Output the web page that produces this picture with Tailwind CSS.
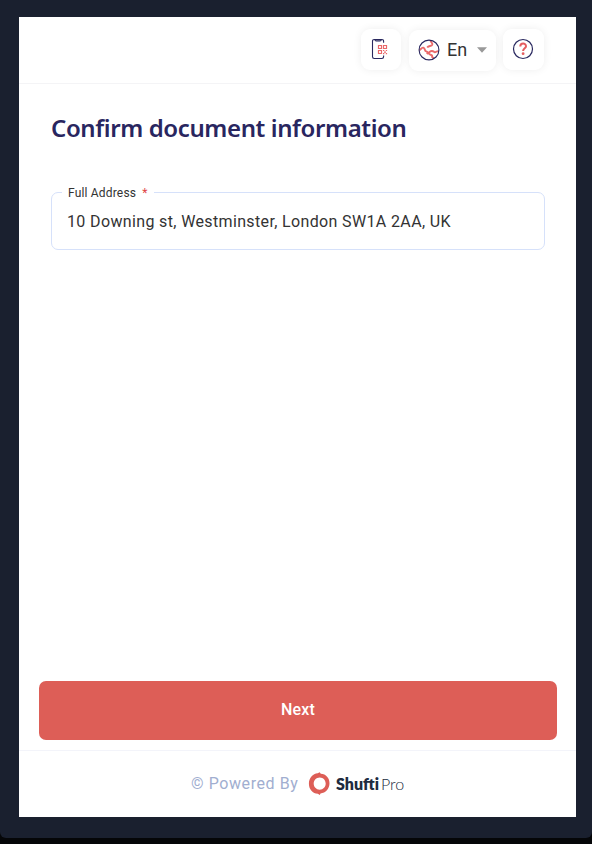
<!DOCTYPE html>
<html lang="en">
<head>
<meta charset="utf-8">
<title>Confirm document information</title>
<script src="https://cdn.jsdelivr.net/npm/@tailwindcss/browser@4"></script>
</head>
<body class="bg-[#050608] font-['Roboto',sans-serif]">
<div class="h-[838px] w-[592px] rounded-b-[6px] bg-[#1a202f] pl-[19px] pr-4 pt-[17px]">
  <div class="flex h-[800px] flex-col bg-white">
    <header class="flex h-[67px] shrink-0 items-start justify-end border-b border-[#f4f4f6] pr-8 pt-3">
      <button class="flex h-[41px] w-10 items-center justify-center rounded-[9px] bg-white pb-px shadow-[0_0_9px_rgba(0,0,0,0.07)]" aria-label="Continue on phone">
        <svg class="h-6 w-6" viewBox="0 0 24 24" fill="none">
          <path d="M14.6 5.8V4.2Q14.6 2.5 12.9 2.5H5.2Q3.5 2.5 3.5 4.2V19.8Q3.5 21.5 5.2 21.5H12.9Q14.6 21.5 14.6 19.8V18.5M5.8 2.5Q6 3.9 7.2 3.9H11Q12.2 3.9 12.4 2.5" stroke="#29285f" stroke-width="1.1"/>
          <path d="M9.5 8.5h3v3h-3zM14.5 8.5h3v3h-3zM9.5 13.5h3v3h-3zM14 13.5h1.3M16.8 13.5h1.3M15 15.2h2M14 16.7h1.3M16.8 16.7h1.3" stroke="#ea696b" stroke-width="1.2"/>
        </svg>
      </button>
      <button class="ml-2 mt-px flex h-[41px] w-[87px] items-center rounded-[9px] bg-white pb-0.5 pl-[9px] shadow-[0_0_9px_rgba(0,0,0,0.07)]">
        <svg class="h-[22px] w-[22px]" viewBox="0 0 22 22" fill="none">
          <path d="M12.6 1.2C12.2 3 15 3.7 14.3 5.6C13.5 7.6 10.6 6.4 9.2 8.5M1.4 11.3C3 10.8 3.4 8.2 5.3 8.7C7.6 9.3 6.2 12 8.3 12.4C10.1 12.9 9.8 14 8.8 15M20.6 12.2C18.4 11.8 17.4 14.2 16 12.8C14.2 11.4 10.8 12.1 10.8 14.4C11.1 16.4 14.6 15.2 14.1 17.4C14.1 18.7 15 19 16 18.6" stroke="#ea696b" stroke-width="1.9"/>
          <circle cx="11" cy="11" r="9.9" stroke="#29285f" stroke-width="1.1"/>
        </svg>
        <span class="ml-[6px] w-[22px] text-[18px] leading-5 text-[#333]">En</span>
        <svg class="ml-[9px] h-[6px] w-[10px]" viewBox="0 0 10 6"><path d="M0 .3h10L5 5.8z" fill="#999"/></svg>
      </button>
      <button class="ml-[7px] flex h-[41px] w-[41px] items-center justify-center rounded-[9px] bg-white pb-px pr-px shadow-[0_0_9px_rgba(0,0,0,0.07)]" aria-label="Help">
        <svg class="h-[22px] w-[22px]" viewBox="0 0 22 22" fill="none">
          <circle cx="11" cy="11" r="9.5" stroke="#29285f" stroke-width="1.2"/>
          <path d="M8.3 8.4C8.3 4.6 14 4.6 14 8.2C14 10.4 11.1 10.2 11.1 13.1" stroke="#e45d60" stroke-width="2"/>
          <circle cx="11.1" cy="15.7" r="1.4" fill="#e45d60"/>
        </svg>
      </button>
    </header>
    <main class="flex flex-1 flex-col px-8 pt-7">
      <h1 class="whitespace-nowrap font-['Noto_Sans',sans-serif] text-[24px] font-semibold leading-8 tracking-[-0.39px] text-[#29265f]">Confirm document information</h1>
      <fieldset class="relative mt-12 h-[58px] w-[494px] rounded-[7px] border border-[#d6e1fa]">
        <legend class="absolute -top-2 left-[10px] whitespace-nowrap bg-white px-1.5 text-[12px] leading-4 tracking-[0.18px] text-[#333]">Full Address <span class="ml-[3px] text-[#e04444]">*</span></legend>
        <p class="whitespace-nowrap pl-[15px] pt-[19px] text-[16px] leading-5 tracking-[0.36px] text-[#333]">10 Downing st, Westminster, London SW1A 2AA, UK</p>
      </fieldset>
    </main>
    <div class="h-[69px] shrink-0 pl-5 pr-[19px]">
      <button class="h-[59px] w-full rounded-[7px] bg-[#dd5e57] pb-0.5 text-[16px] font-medium tracking-[0.2px] text-white">Next</button>
    </div>
    <footer class="flex h-[67px] shrink-0 items-center border-t border-[#f3f4fa] pl-[172px]">
      <span class="w-[108px] whitespace-nowrap text-[16px] tracking-[0.58px] text-[#a1aed0]">© Powered By</span>
      <svg class="ml-[9px] h-6 w-[22px]" viewBox="0 0 22 24"><path fill-rule="evenodd" fill="#dd5e57" d="M11.7.3L12.8 1.8C18 2.1 21.5 6 21.5 11.3C21.5 16.8 17.7 21 12.5 21.5L11.8 22.9L9.8 21.8C4.7 21.5 .9 17.3 .9 11.7C.9 6 4.8 1.6 9.7 1.3ZM11.8 5.5C8.2 5.5 5.7 8.3 5.7 11.6C5.7 15 8.2 17.7 11.7 17.7C15.3 17.7 17.7 15 17.7 11.6C17.7 8.3 15.3 5.5 11.8 5.5Z"/></svg>
      <span class="ml-[6px] whitespace-nowrap pb-px font-['Lato',sans-serif] text-[16px] text-[#202b40]"><b class="font-extrabold">Shufti</b><span class="ml-0.5 font-light">Pro</span></span>
    </footer>
  </div>
</div>
</body>
</html>
